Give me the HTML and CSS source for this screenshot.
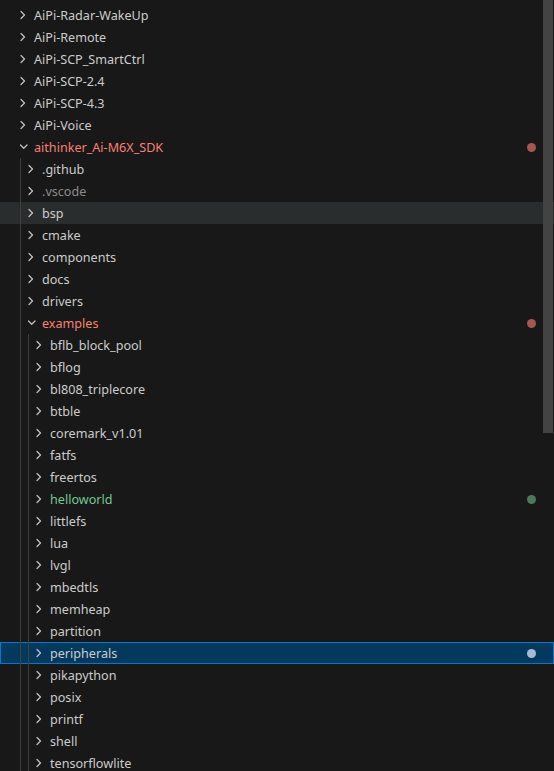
FILE: index.html
```html
<!DOCTYPE html>
<html>
<head>
<meta charset="utf-8">
<link rel="stylesheet" href="styles.css">
</head>
<body>
<div class="explorer">
  <div class="tree">
    <div class="row"><span class="twistie"><svg class="chev" viewBox="0 0 16 16"><path d="M9 4.5L12.5 8L9 11.5"/></svg></span><span class="label">AiPi-Radar-WakeUp</span></div>
    <div class="row"><span class="twistie"><svg class="chev" viewBox="0 0 16 16"><path d="M9 4.5L12.5 8L9 11.5"/></svg></span><span class="label">AiPi-Remote</span></div>
    <div class="row"><span class="twistie"><svg class="chev" viewBox="0 0 16 16"><path d="M9 4.5L12.5 8L9 11.5"/></svg></span><span class="label">AiPi-SCP_SmartCtrl</span></div>
    <div class="row"><span class="twistie"><svg class="chev" viewBox="0 0 16 16"><path d="M9 4.5L12.5 8L9 11.5"/></svg></span><span class="label">AiPi-SCP-2.4</span></div>
    <div class="row"><span class="twistie"><svg class="chev" viewBox="0 0 16 16"><path d="M9 4.5L12.5 8L9 11.5"/></svg></span><span class="label">AiPi-SCP-4.3</span></div>
    <div class="row"><span class="twistie"><svg class="chev" viewBox="0 0 16 16"><path d="M9 4.5L12.5 8L9 11.5"/></svg></span><span class="label">AiPi-Voice</span></div>
    <div class="row"><span class="twistie"><svg class="chev" viewBox="0 0 16 16"><path d="M8.5 6L11.75 9.25L15 6"/></svg></span><span class="label error">aithinker_Ai-M6X_SDK</span><span class="dot dot-error"></span></div>

    <div class="row"><span class="guide"></span><span class="twistie"><svg class="chev" viewBox="0 0 16 16"><path d="M9 4.5L12.5 8L9 11.5"/></svg></span><span class="label">.github</span></div>
    <div class="row"><span class="guide"></span><span class="twistie"><svg class="chev" viewBox="0 0 16 16"><path d="M9 4.5L12.5 8L9 11.5"/></svg></span><span class="label ignored">.vscode</span></div>
    <div class="row hover"><span class="guide"></span><span class="twistie"><svg class="chev" viewBox="0 0 16 16"><path d="M9 4.5L12.5 8L9 11.5"/></svg></span><span class="label">bsp</span></div>
    <div class="row"><span class="guide"></span><span class="twistie"><svg class="chev" viewBox="0 0 16 16"><path d="M9 4.5L12.5 8L9 11.5"/></svg></span><span class="label">cmake</span></div>
    <div class="row"><span class="guide"></span><span class="twistie"><svg class="chev" viewBox="0 0 16 16"><path d="M9 4.5L12.5 8L9 11.5"/></svg></span><span class="label">components</span></div>
    <div class="row"><span class="guide"></span><span class="twistie"><svg class="chev" viewBox="0 0 16 16"><path d="M9 4.5L12.5 8L9 11.5"/></svg></span><span class="label">docs</span></div>
    <div class="row"><span class="guide"></span><span class="twistie"><svg class="chev" viewBox="0 0 16 16"><path d="M9 4.5L12.5 8L9 11.5"/></svg></span><span class="label">drivers</span></div>
    <div class="row"><span class="guide"></span><span class="twistie"><svg class="chev" viewBox="0 0 16 16"><path d="M8.5 6L11.75 9.25L15 6"/></svg></span><span class="label error">examples</span><span class="dot dot-error"></span></div>

    <div class="row"><span class="guide"></span><span class="guide"></span><span class="twistie"><svg class="chev" viewBox="0 0 16 16"><path d="M9 4.5L12.5 8L9 11.5"/></svg></span><span class="label">bflb_block_pool</span></div>
    <div class="row"><span class="guide"></span><span class="guide"></span><span class="twistie"><svg class="chev" viewBox="0 0 16 16"><path d="M9 4.5L12.5 8L9 11.5"/></svg></span><span class="label">bflog</span></div>
    <div class="row"><span class="guide"></span><span class="guide"></span><span class="twistie"><svg class="chev" viewBox="0 0 16 16"><path d="M9 4.5L12.5 8L9 11.5"/></svg></span><span class="label">bl808_triplecore</span></div>
    <div class="row"><span class="guide"></span><span class="guide"></span><span class="twistie"><svg class="chev" viewBox="0 0 16 16"><path d="M9 4.5L12.5 8L9 11.5"/></svg></span><span class="label">btble</span></div>
    <div class="row"><span class="guide"></span><span class="guide"></span><span class="twistie"><svg class="chev" viewBox="0 0 16 16"><path d="M9 4.5L12.5 8L9 11.5"/></svg></span><span class="label">coremark_v1.01</span></div>
    <div class="row"><span class="guide"></span><span class="guide"></span><span class="twistie"><svg class="chev" viewBox="0 0 16 16"><path d="M9 4.5L12.5 8L9 11.5"/></svg></span><span class="label">fatfs</span></div>
    <div class="row"><span class="guide"></span><span class="guide"></span><span class="twistie"><svg class="chev" viewBox="0 0 16 16"><path d="M9 4.5L12.5 8L9 11.5"/></svg></span><span class="label">freertos</span></div>
    <div class="row"><span class="guide"></span><span class="guide"></span><span class="twistie"><svg class="chev" viewBox="0 0 16 16"><path d="M9 4.5L12.5 8L9 11.5"/></svg></span><span class="label added">helloworld</span><span class="dot dot-added"></span></div>
    <div class="row"><span class="guide"></span><span class="guide"></span><span class="twistie"><svg class="chev" viewBox="0 0 16 16"><path d="M9 4.5L12.5 8L9 11.5"/></svg></span><span class="label">littlefs</span></div>
    <div class="row"><span class="guide"></span><span class="guide"></span><span class="twistie"><svg class="chev" viewBox="0 0 16 16"><path d="M9 4.5L12.5 8L9 11.5"/></svg></span><span class="label">lua</span></div>
    <div class="row"><span class="guide"></span><span class="guide"></span><span class="twistie"><svg class="chev" viewBox="0 0 16 16"><path d="M9 4.5L12.5 8L9 11.5"/></svg></span><span class="label">lvgl</span></div>
    <div class="row"><span class="guide"></span><span class="guide"></span><span class="twistie"><svg class="chev" viewBox="0 0 16 16"><path d="M9 4.5L12.5 8L9 11.5"/></svg></span><span class="label">mbedtls</span></div>
    <div class="row"><span class="guide"></span><span class="guide"></span><span class="twistie"><svg class="chev" viewBox="0 0 16 16"><path d="M9 4.5L12.5 8L9 11.5"/></svg></span><span class="label">memheap</span></div>
    <div class="row"><span class="guide"></span><span class="guide"></span><span class="twistie"><svg class="chev" viewBox="0 0 16 16"><path d="M9 4.5L12.5 8L9 11.5"/></svg></span><span class="label">partition</span></div>
    <div class="row selected"><span class="guide"></span><span class="guide"></span><span class="twistie"><svg class="chev" viewBox="0 0 16 16"><path d="M9 4.5L12.5 8L9 11.5"/></svg></span><span class="label">peripherals</span><span class="dot dot-selected"></span></div>
    <div class="row"><span class="guide"></span><span class="guide"></span><span class="twistie"><svg class="chev" viewBox="0 0 16 16"><path d="M9 4.5L12.5 8L9 11.5"/></svg></span><span class="label">pikapython</span></div>
    <div class="row"><span class="guide"></span><span class="guide"></span><span class="twistie"><svg class="chev" viewBox="0 0 16 16"><path d="M9 4.5L12.5 8L9 11.5"/></svg></span><span class="label">posix</span></div>
    <div class="row"><span class="guide"></span><span class="guide"></span><span class="twistie"><svg class="chev" viewBox="0 0 16 16"><path d="M9 4.5L12.5 8L9 11.5"/></svg></span><span class="label">printf</span></div>
    <div class="row"><span class="guide"></span><span class="guide"></span><span class="twistie"><svg class="chev" viewBox="0 0 16 16"><path d="M9 4.5L12.5 8L9 11.5"/></svg></span><span class="label">shell</span></div>
    <div class="row"><span class="guide"></span><span class="guide"></span><span class="twistie"><svg class="chev" viewBox="0 0 16 16"><path d="M9 4.5L12.5 8L9 11.5"/></svg></span><span class="label">tensorflowlite</span></div>
  </div>
  <div class="scrollbar"></div>
</div>
</body>
</html>
```

FILE: styles.css
```css
html, body {
  margin: 0;
  padding: 0;
  background: #181818;
  overflow: hidden;
}

.explorer {
  position: relative;
  width: 554px;
  height: 771px;
  overflow: hidden;
  background: #181818;
  font-family: "Noto Sans", "Open Sans", sans-serif;
  font-size: 12.6px;
  color: #cccccc;
}

.tree {
  display: flex;
  flex-direction: column;
  padding-top: 4px;
}

.row {
  box-sizing: border-box;
  height: 22px;
  display: flex;
  align-items: stretch;
  padding-left: 11px;
  padding-right: 17px;
  border: 1px solid transparent;
}

.row.hover {
  background: #2a2d2e;
}

.row.selected {
  background: #04395e;
  border-color: #0078d4;
}

.guide {
  width: 8px;
  flex: none;
  border-right: 1px solid #404040;
  margin-right: -1px;
  margin-top: -1px;
  margin-bottom: -1px;
}

.twistie {
  width: 16px;
  flex: none;
  margin-right: 6px;
  display: flex;
  align-items: center;
}

.chev {
  width: 16px;
  height: 16px;
  display: block;
}

.chev path {
  fill: none;
  stroke: #c5c5c5;
  stroke-width: 1.2;
  stroke-linecap: round;
  stroke-linejoin: round;
}

.label {
  flex: 1;
  line-height: 20px;
  padding-top: 1px;
  white-space: nowrap;
}

.label.error { color: #f88070; }
.label.added { color: #73c991; }
.label.ignored { color: #8c8c8c; }

.dot {
  flex: none;
  width: 9px;
  height: 9px;
  border-radius: 50%;
  align-self: center;
}

.dot-error { background: #a5574d; }
.dot-added { background: #4b7a58; }
.dot-selected { background: #a7bad2; }

.scrollbar {
  position: absolute;
  top: 0;
  left: 543px;
  width: 10px;
  height: 433px;
  background: #434343;
}
```
